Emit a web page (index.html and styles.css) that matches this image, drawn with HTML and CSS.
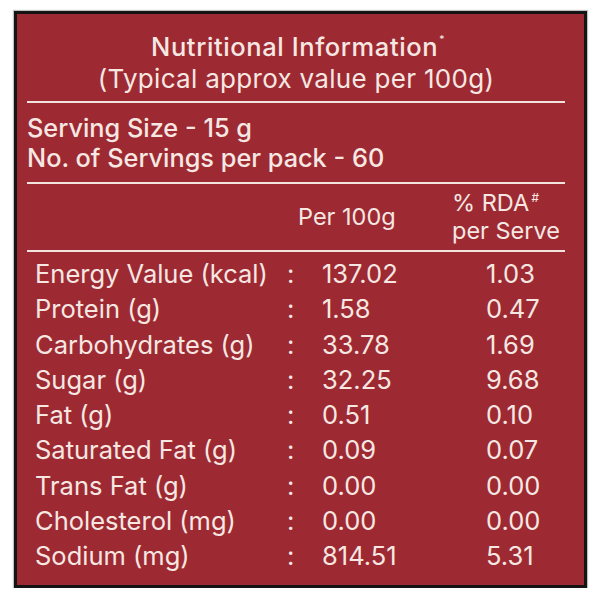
FILE: index.html
```html
<!DOCTYPE html>
<html lang="en">
<head>
<meta charset="utf-8">
<title>Nutritional Information</title>
<link rel="stylesheet" href="styles.css">
</head>
<body>
<div class="card">
  <div class="head">
    <div class="title">Nutritional Information<sup class="star">*</sup></div>
    <div class="subtitle">(Typical approx value per 100g)</div>
  </div>
  <div class="rule"></div>
  <div class="serving">
    <div>Serving Size - 15 g</div>
    <div>No. of Servings per pack - 60</div>
  </div>
  <div class="rule"></div>
  <div class="colhead">
    <div></div>
    <div class="ch-per">Per 100g</div>
    <div class="ch-rda">% RDA<sup class="hash">#</sup><br>per Serve</div>
  </div>
  <div class="rule"></div>
  <div class="rows">
    <div class="row"><span>Energy Value (kcal)</span><span class="colon">:</span><span>137.02</span><span>1.03</span></div>
    <div class="row"><span>Protein (g)</span><span class="colon">:</span><span>1.58</span><span>0.47</span></div>
    <div class="row"><span>Carbohydrates (g)</span><span class="colon">:</span><span>33.78</span><span>1.69</span></div>
    <div class="row"><span>Sugar (g)</span><span class="colon">:</span><span>32.25</span><span>9.68</span></div>
    <div class="row"><span>Fat (g)</span><span class="colon">:</span><span>0.51</span><span>0.10</span></div>
    <div class="row"><span>Saturated Fat (g)</span><span class="colon">:</span><span>0.09</span><span>0.07</span></div>
    <div class="row"><span>Trans Fat (g)</span><span class="colon">:</span><span>0.00</span><span>0.00</span></div>
    <div class="row"><span>Cholesterol (mg)</span><span class="colon">:</span><span>0.00</span><span>0.00</span></div>
    <div class="row"><span>Sodium (mg)</span><span class="colon">:</span><span>814.51</span><span>5.31</span></div>
  </div>
</div>
</body>
</html>
```
FILE: styles.css
```css
html, body {
  margin: 0;
  padding: 0;
  background: #ffffff;
}

body {
  font-family: "Inter", "Lato", sans-serif;
  color: #f6e7e2;
}

.card {
  box-sizing: border-box;
  width: 573px;
  height: 577px;
  margin: 11px 0 0 14px;
  border: 3px solid #141414;
  box-shadow: 0 0 1px 1px rgba(80, 80, 80, 0.35);
  background: #9d2a33;
  padding: 0 19px 0 10px;
}

.head {
  padding-top: 17px;
  text-align: center;
}

.title {
  font-size: 25.5px;
  line-height: 32px;
  font-weight: 500;
  letter-spacing: 0.6px;
  padding-left: 4px;
}

.star {
  font-size: 10px;
  vertical-align: top;
  line-height: 1;
  position: relative;
  top: 3px;
  margin-left: 1px;
}

.subtitle {
  font-size: 26px;
  line-height: 32px;
  font-weight: 400;
  letter-spacing: 0.3px;
  padding-bottom: 6px;
}

.rule {
  height: 2px;
  background: #f3e3de;
}

.serving {
  padding: 10px 0 9px 0;
  font-size: 25.3px;
  line-height: 30px;
  font-weight: 500;
}

.colhead {
  display: grid;
  grid-template-columns: 271px 154px 1fr;
  align-items: center;
  padding: 5px 0 5px 0;
  font-size: 23.5px;
  line-height: 28px;
}

.hash {
  font-size: 12px;
  vertical-align: top;
  line-height: 1;
  position: relative;
  top: 3px;
  margin-left: 2px;
  font-style: italic;
}

.rows {
  padding-top: 4px;
}

.row {
  display: grid;
  grid-template-columns: 252px 35px 164px 1fr;
  padding-left: 8px;
  font-size: 25.5px;
  line-height: 35.25px;
  font-weight: 400;
}
```
